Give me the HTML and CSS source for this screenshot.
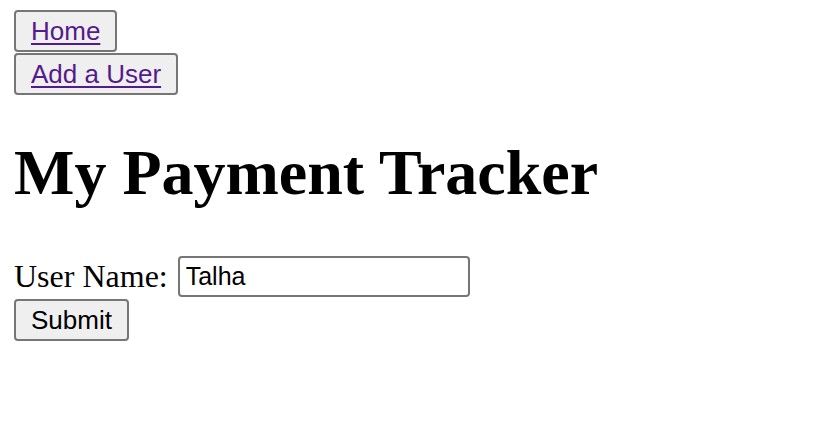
FILE: index.html
```html
<!DOCTYPE html>
<html>
<head>
<meta charset="utf-8">
<link rel="stylesheet" href="styles.css">
</head>
<body class="page">
  <nav class="nav">
    <button class="nav-btn"><a class="nav-link" href="#">Home</a></button>
    <button class="nav-btn"><a class="nav-link" href="#">Add a User</a></button>
  </nav>
  <h1 class="title">My Payment Tracker</h1>
  <form class="user-form">
    <label class="field">User Name: <input class="text-input" type="text" value="Talha"></label>
    <button class="submit-btn" type="button">Submit</button>
  </form>
</body>
</html>
```

FILE: styles.css
```css
html, body {
  background: #ffffff;
}
.page {
  margin: 10px 14px;
  font-family: "Liberation Serif", "Times New Roman", serif;
  font-size: 32px;
  color: #000;
}
.nav {
  display: flex;
  flex-direction: column;
  align-items: flex-start;
  gap: 1px;
}
.nav-btn, .submit-btn {
  font-family: "Liberation Sans", Arial, sans-serif;
  font-size: 26px;
  line-height: 30px;
  padding: 4px 15px;
  background: #efefef;
  border: 2px solid #767676;
  border-radius: 4px;
  color: #000;
  margin: 0;
}
.nav-link {
  color: #551a8b;
  text-decoration: underline;
  text-underline-offset: 3px;
  text-decoration-thickness: 2px;
}
.title {
  font-size: 64px;
  font-weight: bold;
  margin: 41px 0 46px;
  line-height: 74px;
}
.user-form {
  display: flex;
  flex-direction: column;
  align-items: flex-start;
  gap: 2px;
}
.field {
  display: flex;
  align-items: center;
  gap: 10px;
}
.text-input {
  font-family: "Liberation Sans", Arial, sans-serif;
  font-size: 25px;
  width: 292px;
  height: 41px;
  box-sizing: border-box;
  padding: 2px 6px;
  border: 2px solid #767676;
  border-radius: 4px;
  margin: 0;
}
```
